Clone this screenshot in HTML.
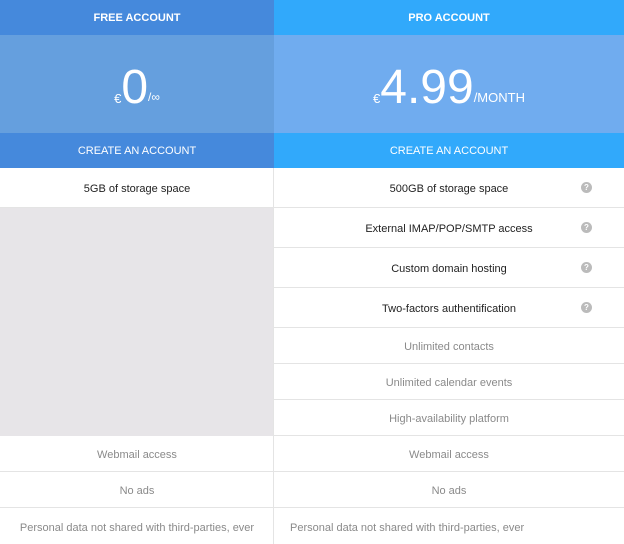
<!DOCTYPE html>
<html><head><meta charset="utf-8"><style>
*{margin:0;padding:0;box-sizing:border-box}
body{width:624px;height:544px;overflow:hidden;background:#fff;font-family:"Liberation Sans",sans-serif;position:relative}
.b{position:absolute;display:flex;align-items:center;justify-content:center;text-align:center}
.l{left:0;width:274px}.r{left:274px;width:350px}
.h{top:0;height:35px;color:#fff;font-weight:bold;font-size:11px}
.p{top:35px;height:98px;color:#fff;font-weight:300;padding-top:6px}
.c{top:133px;height:35px;color:#fff;font-size:11px}
.row{font-size:11px;color:#222;border-bottom:1px solid #e4e4e4;padding-top:3px}
.lt{color:#8a8a8a}
.q{position:absolute;right:32px;width:11px;height:11px;border-radius:50%;background:#bbb;color:#fff;font-size:8px;font-weight:bold;line-height:11px;text-align:center;top:14px}
</style></head><body>
<div class="b l h" style="background:#4589dc">FREE ACCOUNT</div>
<div class="b r h" style="background:#31a9fb">PRO ACCOUNT</div>
<div class="b l p" style="background:#659fde"><span style="font-size:13px;margin-top:22px">€</span><span style="font-size:48px">0</span><span style="font-size:12px;margin-top:20px">/∞</span></div>
<div class="b r p" style="background:#70acef"><span style="font-size:13px;margin-top:22px">€</span><span style="font-size:48px">4.99</span><span style="font-size:13px;margin-top:20px">/MONTH</span></div>
<div class="b l c" style="background:#4589dc">CREATE AN ACCOUNT</div>
<div class="b r c" style="background:#31a9fb">CREATE AN ACCOUNT</div>

<div class="b l row" style="top:168px;height:40px">5GB of storage space</div>
<div style="position:absolute;left:0;top:208px;width:274px;height:228px;background:#e7e5e8"></div>
<div style="position:absolute;left:273px;top:168px;width:1px;height:376px;background:#e4e4e4"></div>

<div class="b r row" style="top:168px;height:40px">500GB of storage space<span class="q">?</span></div>
<div class="b r row" style="top:208px;height:40px">External IMAP/POP/SMTP access<span class="q">?</span></div>
<div class="b r row" style="top:248px;height:40px">Custom domain hosting<span class="q">?</span></div>
<div class="b r row" style="top:288px;height:40px">Two-factors authentification<span class="q">?</span></div>
<div class="b r row lt" style="top:328px;height:36px">Unlimited contacts</div>
<div class="b r row lt" style="top:364px;height:36px">Unlimited calendar events</div>
<div class="b r row lt" style="top:400px;height:36px">High-availability platform</div>
<div class="b l row lt" style="top:436px;height:36px">Webmail access</div>
<div class="b r row lt" style="top:436px;height:36px">Webmail access</div>
<div class="b l row lt" style="top:472px;height:36px">No ads</div>
<div class="b r row lt" style="top:472px;height:36px">No ads</div>
<div class="b l row lt" style="top:508px;height:36px;border:0">Personal data not shared with third-parties, ever</div>
<div class="b r row lt" style="top:508px;height:36px;border:0;justify-content:flex-start;padding-left:16px">Personal data not shared with third-parties, ever</div>
</body></html>
